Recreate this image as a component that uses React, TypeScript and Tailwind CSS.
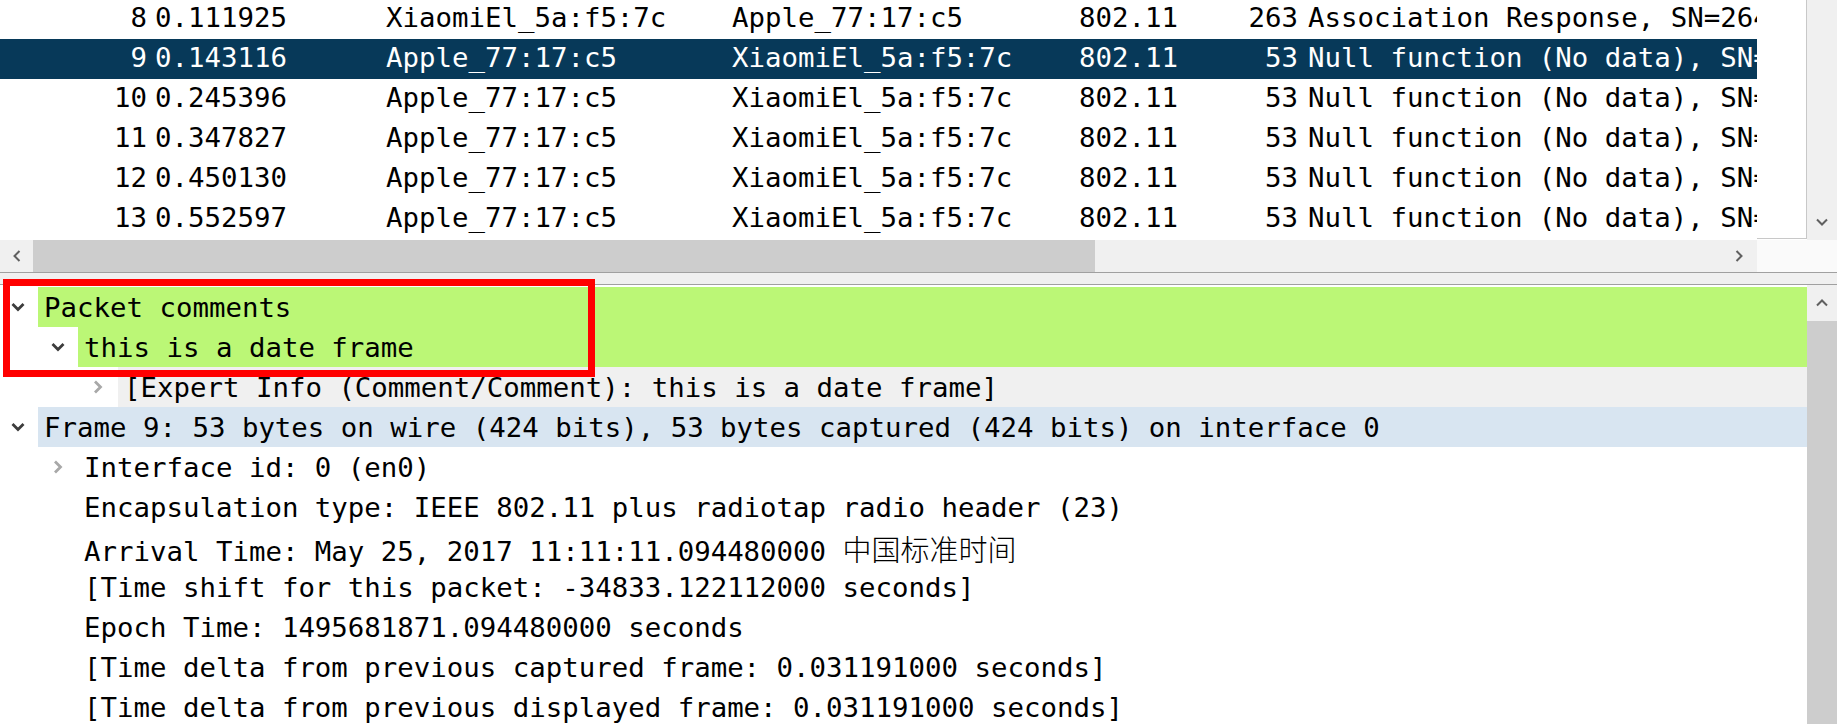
const packets = [
  { no: "8", time: "0.111925", src: "XiaomiEl_5a:f5:7c", dst: "Apple_77:17:c5", proto: "802.11", len: "263", info: "Association Response, SN=264, FN=0, Flags=........C" },
  { no: "9", time: "0.143116", src: "Apple_77:17:c5", dst: "XiaomiEl_5a:f5:7c", proto: "802.11", len: "53", info: "Null function (No data), SN=1, FN=0, Flags=...P...TC" },
  { no: "10", time: "0.245396", src: "Apple_77:17:c5", dst: "XiaomiEl_5a:f5:7c", proto: "802.11", len: "53", info: "Null function (No data), SN=2, FN=0, Flags=...P...TC" },
  { no: "11", time: "0.347827", src: "Apple_77:17:c5", dst: "XiaomiEl_5a:f5:7c", proto: "802.11", len: "53", info: "Null function (No data), SN=3, FN=0, Flags=...P...TC" },
  { no: "12", time: "0.450130", src: "Apple_77:17:c5", dst: "XiaomiEl_5a:f5:7c", proto: "802.11", len: "53", info: "Null function (No data), SN=4, FN=0, Flags=...P...TC" },
  { no: "13", time: "0.552597", src: "Apple_77:17:c5", dst: "XiaomiEl_5a:f5:7c", proto: "802.11", len: "53", info: "Null function (No data), SN=5, FN=0, Flags=...P...TC" },
];

type Node = {
  level: number;
  text: React.ReactNode;
  arrow?: "open" | "closed";
  bg?: string;
};

const tree: Node[] = [
  { level: 0, text: "Packet comments", arrow: "open", bg: "bg-[#bbf776]" },
  { level: 1, text: "this is a date frame", arrow: "open", bg: "bg-[#bbf776]" },
  { level: 2, text: "[Expert Info (Comment/Comment): this is a date frame]", arrow: "closed", bg: "bg-[#f0f0f0]" },
  { level: 0, text: "Frame 9: 53 bytes on wire (424 bits), 53 bytes captured (424 bits) on interface 0", arrow: "open", bg: "bg-[#d8e5f1]" },
  { level: 1, text: "Interface id: 0 (en0)", arrow: "closed" },
  { level: 1, text: "Encapsulation type: IEEE 802.11 plus radiotap radio header (23)" },
  {
    level: 1,
    text: (
      <>
        Arrival Time: May 25, 2017 11:11:11.094480000{" "}
        <span className="font-['Noto_Sans_CJK_SC',sans-serif] font-light text-[29px]">中国标准时间</span>
      </>
    ),
  },
  { level: 1, text: "[Time shift for this packet: -34833.122112000 seconds]" },
  { level: 1, text: "Epoch Time: 1495681871.094480000 seconds" },
  { level: 1, text: "[Time delta from previous captured frame: 0.031191000 seconds]" },
  { level: 1, text: "[Time delta from previous displayed frame: 0.031191000 seconds]" },
];

function Chevron({ dir, className }: { dir: "down" | "right" | "left" | "up"; className?: string }) {
  const d = {
    down: "M2.5 5 L8 10.5 L13.5 5",
    up: "M2.5 11 L8 5.5 L13.5 11",
    right: "M5 2.5 L10.5 8 L5 13.5",
    left: "M11 2.5 L5.5 8 L11 13.5",
  }[dir];
  return (
    <svg width="16" height="16" viewBox="0 0 16 16" className={className}>
      <path d={d} fill="none" stroke="currentColor" strokeWidth="2.8" strokeLinecap="butt" strokeLinejoin="miter" />
    </svg>
  );
}

function SmallChevron({ dir }: { dir: "down" | "right" | "left" | "up" }) {
  const d = {
    down: "M2 4.5 L7 9.5 L12 4.5",
    up: "M2 9.5 L7 4.5 L12 9.5",
    right: "M4.5 2 L9.5 7 L4.5 12",
    left: "M9.5 2 L4.5 7 L9.5 12",
  }[dir];
  return (
    <svg width="14" height="14" viewBox="0 0 14 14">
      <path d={d} fill="none" stroke="currentColor" strokeWidth="2" />
    </svg>
  );
}

export default function App() {
  return (
    <div className="relative w-[1837px] h-[725px] overflow-hidden bg-white text-black font-['DejaVu_Sans_Mono',monospace] text-[27.4px]">
      {/* packet list */}
      <div className="flex h-[240px]">
        <div className="w-[1757px] overflow-hidden">
          <div className="-mt-px">
            {packets.map((p) => {
              const sel = p.no === "9";
              return (
                <div
                  key={p.no}
                  className={`flex h-[40px] leading-[37px] whitespace-nowrap ${sel ? "bg-[#073959] text-white" : ""}`}
                >
                  <div className="w-[147px] text-right">{p.no}</div>
                  <div className="w-[239px] pl-[8px]">{p.time}</div>
                  <div className="w-[346px]">{p.src}</div>
                  <div className="w-[347px]">{p.dst}</div>
                  <div className="w-[90px]">{p.proto}</div>
                  <div className="w-[129px] text-right">{p.len}</div>
                  <div className="flex-1 pl-[10px] overflow-hidden">{p.info}</div>
                </div>
              );
            })}
          </div>
        </div>
        <div className="w-[50px] h-[239px] border-r border-b border-[#c8c8c8]" />
        <div className="w-[30px] bg-[#f0f0f0] flex flex-col justify-end">
          <div className="h-[36px] flex items-center justify-center text-[#606060]">
            <SmallChevron dir="down" />
          </div>
        </div>
      </div>

      {/* horizontal scrollbar */}
      <div className="flex h-[33px] border-b border-[#a0a0a0]">
        <div className="w-[1757px] flex bg-[#f0f0f0]">
          <div className="w-[33px] flex items-center justify-center text-[#606060]">
            <SmallChevron dir="left" />
          </div>
          <div className="w-[1062px] bg-[#cdcdcd]" />
          <div className="flex-1" />
          <div className="w-[37px] flex items-center justify-center text-[#606060]">
            <SmallChevron dir="right" />
          </div>
        </div>
        <div className="flex-1 bg-[#fafafa]" />
      </div>

      {/* splitter */}
      <div className="h-[12px] bg-[#f0f0f0] border-b border-[#a0a0a0]" />

      {/* packet details */}
      <div className="flex h-[439px]">
        <div className="w-[1807px] pt-[2px]">
          {tree.map((n, i) => (
            <div key={i} className="flex h-[40px] leading-[42px] whitespace-nowrap">
              <div
                className={`${n.level === 0 ? "w-[38px]" : n.level === 1 ? "w-[78px]" : "w-[118px]"} flex items-center justify-end pr-[12px]`}
              >
                {n.arrow === "open" && <Chevron dir="down" className="text-[#3c3c3c]" />}
                {n.arrow === "closed" && <Chevron dir="right" className="text-[#a8a8a8]" />}
              </div>
              <div className={`flex-1 pl-[6px] ${n.bg ?? ""}`}>{n.text}</div>
            </div>
          ))}
        </div>
        <div className="w-[30px] flex flex-col">
          <div className="h-[36px] bg-[#f0f0f0] flex items-center justify-center text-[#606060]">
            <SmallChevron dir="up" />
          </div>
          <div className="flex-1 bg-[#cdcdcd]" />
        </div>
      </div>

      {/* annotation box */}
      <div className="absolute left-[3px] top-[279px] w-[592px] h-[98px] border-[7px] border-[#ff0000]" />
    </div>
  );
}
